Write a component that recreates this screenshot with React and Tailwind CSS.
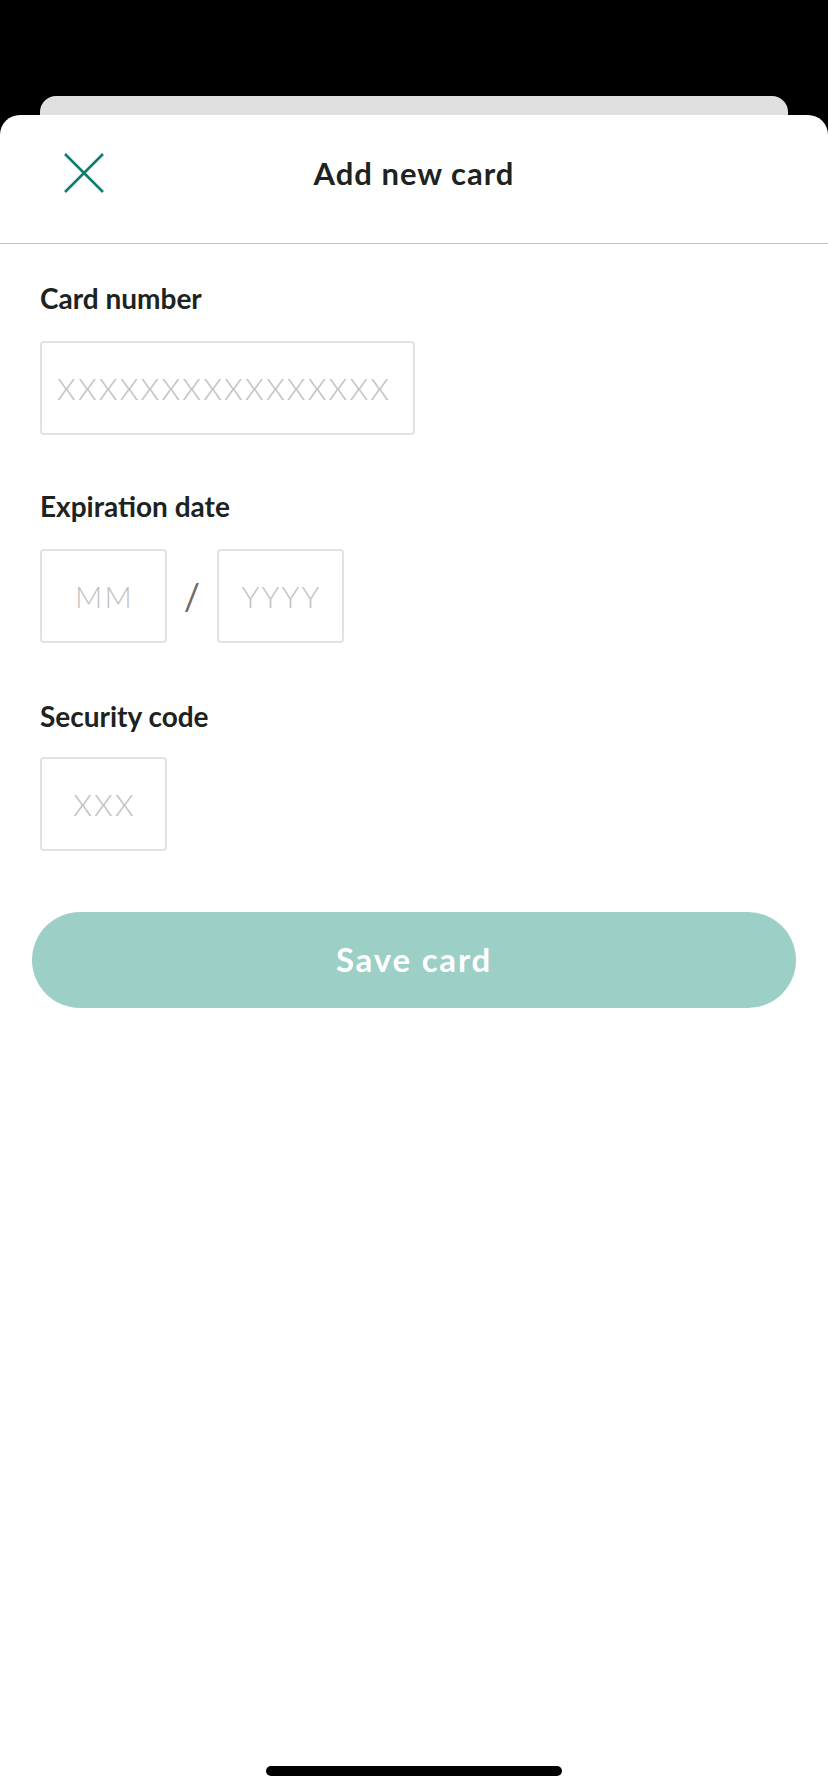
import React from "react";

const font = { fontFamily: "Lato, 'Open Sans', sans-serif" };

function Field({ label, children, first }) {
  return (
    <div className={first ? "pt-[37px]" : "pt-[54px]"}>
      <div className="text-[28px] leading-[34px] font-bold text-[#1c2321]">{label}</div>
      <div className="mt-[26px] flex items-center">{children}</div>
    </div>
  );
}

function Box({ w, children, center }) {
  return (
    <div
      className={`h-[94px] ${w} rounded-[4px] border-2 border-[#e2e2e2] bg-white flex items-center ${center ? "justify-center pl-[2px]" : "pl-[15px]"} text-[30px] tracking-[2.2px] font-light text-[#c2c2c2]`}
    >
      {children}
    </div>
  );
}

export default function App() {
  return (
    <div className="min-h-[1792px] h-[1792px] bg-black flex flex-col pt-[96px]" style={font}>
      <div className="mx-[40px] h-[19px] rounded-t-[16px] bg-[#e0e0e0]" />
      <div className="flex-1 bg-white rounded-t-[20px] flex flex-col">
        <div className="h-[129px] border-b border-[#c4c4c4] pt-[38px]">
          <div className="grid grid-cols-[1fr_auto_1fr] items-center h-[40px]">
            <div className="pl-[64px] flex items-center">
              <svg width="40" height="40" viewBox="0 0 40 40" fill="none">
                <path d="M1 1L39 39M39 1L1 39" stroke="#0d7f6e" strokeWidth="2.6" strokeLinecap="butt" />
              </svg>
            </div>
            <div className="text-[31px] leading-[40px] tracking-[1px] font-bold text-[#1c2321]">Add new card</div>
            <div />
          </div>
        </div>
        <div className="px-[40px]">
          <Field label="Card number" first>
            <Box w="w-[375px]">XXXXXXXXXXXXXXXX</Box>
          </Field>
          <Field label="Expiration date">
            <Box w="w-[127px]" center>MM</Box>
            <div className="w-[50px] text-center text-[36px] font-normal text-[#6d6d6d]">/</div>
            <Box w="w-[127px]" center>YYYY</Box>
          </Field>
          <div className="pt-[56px]">
            <div className="text-[28px] leading-[34px] font-bold text-[#1c2321]">Security code</div>
            <div className="mt-[24px] flex items-center">
              <Box w="w-[127px]" center>XXX</Box>
            </div>
          </div>
        </div>
        <div className="px-[32px] pt-[61px]">
          <button className="w-full h-[96px] rounded-full bg-[#9ccfc5] text-white text-[33px] tracking-[1.8px] font-bold">
            Save card
          </button>
        </div>
        <div className="mt-auto pb-[16px] flex justify-center">
          <div className="w-[296px] h-[10px] rounded-full bg-black" />
        </div>
      </div>
    </div>
  );
}
